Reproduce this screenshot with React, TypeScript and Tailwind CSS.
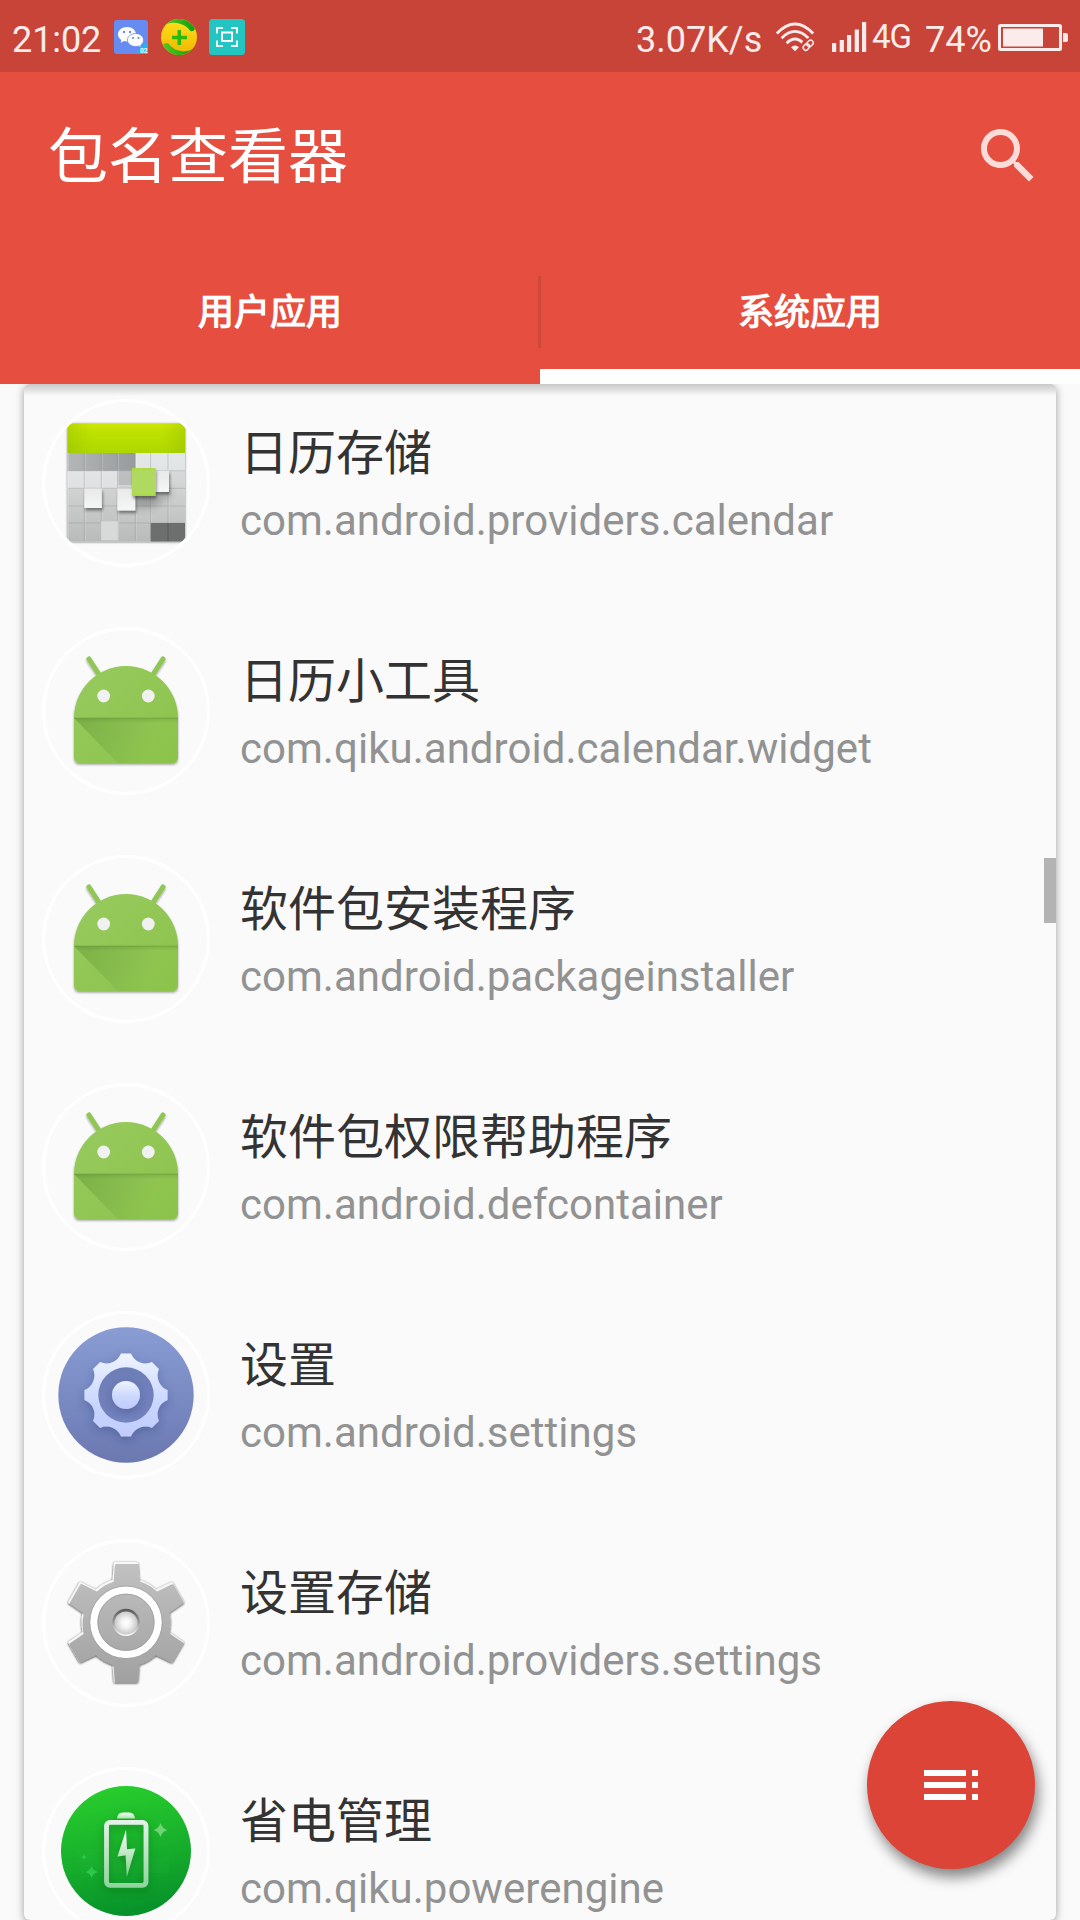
import React from "react";

const CJK = "font-[Roboto,'Noto_Sans_CJK_SC',sans-serif]";

function CalendarIcon() {
  const cols = [-58.5, -41.7, -24.7, -8.5, 9.3, 24.7, 42, 59];
  const rows = [-30, -12.3, 5.3, 23, 40, 58.5];
  return (
    <svg viewBox="-84 -84 168 168" className="size-full">
      <defs>
        <clipPath id="calClip"><circle r="81" /></clipPath>
        <linearGradient id="calTop" x1="0" y1="0" x2="0" y2="1">
          <stop offset="0" stopColor="#cfe600" />
          <stop offset=".25" stopColor="#bfe200" />
          <stop offset="1" stopColor="#aed700" />
        </linearGradient>
        <linearGradient id="calEdge" x1="0" x2="1">
          <stop offset="0" stopColor="#7fa600" stopOpacity=".25" />
          <stop offset=".2" stopColor="#7fa600" stopOpacity="0" />
          <stop offset=".8" stopColor="#7fa600" stopOpacity="0" />
          <stop offset="1" stopColor="#7fa600" stopOpacity=".25" />
        </linearGradient>
        <linearGradient id="calBody" x1="0" y1="0" x2="0" y2="1">
          <stop offset="0" stopColor="#dfe1e2" />
          <stop offset=".5" stopColor="#cdcfcf" />
          <stop offset="1" stopColor="#b9bbba" />
        </linearGradient>
        <linearGradient id="calDark" x1="0" x2="1">
          <stop offset="0" stopColor="#b4b6b7" />
          <stop offset="1" stopColor="#989b9d" />
        </linearGradient>
        <linearGradient id="calTile" x1="0" y1="0" x2="0" y2="1">
          <stop offset="0" stopColor="#e9e9e9" />
          <stop offset="1" stopColor="#f6f6f6" />
        </linearGradient>
        <filter id="calShadow" x="-50%" y="-50%" width="200%" height="200%">
          <feDropShadow dx="1" dy="2.5" stdDeviation="1.6" floodOpacity=".45" />
        </filter>
        <filter id="calBlur" x="-50%" y="-50%" width="200%" height="200%">
          <feGaussianBlur stdDeviation="4" />
        </filter>
        <filter id="calOuter">
          <feDropShadow dx="0" dy="0.5" stdDeviation="1" floodOpacity=".55" />
        </filter>
      </defs>
      <g clipPath="url(#calClip)">
        <rect x="-58.5" y="-59.5" width="117.5" height="118" rx="3" fill="#c5c7c7" filter="url(#calOuter)" />
        <rect x="-58.5" y="-30" width="117.5" height="88.5" fill="url(#calBody)" />
        <rect x="-58.5" y="-12.3" width="51" height="18" fill="#e6e7e8" opacity=".7" />
        <rect x="9" y="-30" width="50" height="18" fill="#e6e9ea" opacity=".7" />
        <rect x="-58.5" y="-30" width="67.8" height="17.7" fill="url(#calDark)" />
        <path d="M-8-12h17v14h-17z" fill="#9da0a1" opacity=".45" />
        <g stroke="#8f9192" strokeWidth=".9" opacity=".42">
          {cols.slice(1, -1).map((x) => <path key={x} d={`M${x} -30V58`} />)}
          {rows.slice(1, -1).map((y) => <path key={y} d={`M-58 ${y}H59`} />)}
        </g>
        <g stroke="#fff" strokeWidth=".8" opacity=".22">
          {cols.slice(0, -1).map((x) => <path key={x} d={`M${x + 1} -30V58`} />)}
        </g>
        <rect x="24.7" y="40" width="34.3" height="18.5" fill="#6d6f6e" />
        <path d="M42 40V58" stroke="#595b5a" strokeWidth="1" />
        <path d="M8 12h28l8-8v8l-18 12H8z" fill="#000" opacity=".28" filter="url(#calBlur)" />
        <rect x="-41.7" y="5.5" width="17.5" height="19.5" fill="url(#calTile)" filter="url(#calShadow)" />
        <rect x="-8.7" y="5.5" width="18" height="22" fill="url(#calTile)" filter="url(#calShadow)" />
        <rect x="28" y="-12.3" width="15" height="21.3" fill="url(#calTile)" filter="url(#calShadow)" />
        <rect x="-25" y="38" width="17" height="19.5" fill="#d9d9da" stroke="#c4c5c5" strokeWidth=".6" />
        <rect x="6" y="-14.7" width="23.5" height="27.8" rx="1" fill="#afd95f" filter="url(#calShadow)" />
        <path d="M6-13.9h23.5M6 12.3h23.5" stroke="#a6df2c" strokeWidth="1.6" />
        <path d="M-58.5-30v-26.500q0-3 3-3h111.500q3 0 3 3v26.500z" fill="url(#calTop)" />
        <path d="M-58.5-30v-26.500q0-3 3-3h111.500q3 0 3 3v26.500z" fill="url(#calEdge)" />
      </g>
    </svg>
  );
}

function AndroidIcon() {
  return (
    <svg viewBox="-84 -84 168 168" className="size-full">
      <defs>
        <linearGradient id="droid" x1="0" y1="0" x2="1" y2="1">
          <stop offset="0" stopColor="#98ca5f" />
          <stop offset="1" stopColor="#8bc34a" />
        </linearGradient>
        <linearGradient id="droidLong" gradientUnits="userSpaceOnUse" x1="-40" y1="10" x2="24" y2="34">
          <stop offset="0" stopColor="#558b2f" stopOpacity=".34" />
          <stop offset="1" stopColor="#558b2f" stopOpacity="0" />
        </linearGradient>
        <linearGradient id="droidFold" x1="0" y1="0" x2="0" y2="1">
          <stop offset="0" stopColor="#40641c" stopOpacity=".2" />
          <stop offset="1" stopColor="#40641c" stopOpacity="0" />
        </linearGradient>
        <filter id="droidShadow" x="-20%" y="-20%" width="140%" height="140%">
          <feDropShadow dx="0" dy="1.6" stdDeviation="1.2" floodOpacity=".38" />
        </filter>
      </defs>
      <g filter="url(#droidShadow)">
        <path d="M-37-52l11 17M37-52L26-35" stroke="#90c653" strokeWidth="5" strokeLinecap="round" />
        <path d="M-52 7a52 52 0 0 1 104 0v39q0 6-6 6h-92q-6 0-6-6z" fill="url(#droid)" />
      </g>
      <path d="M-52 7H52V46q0 6-6 6H-8z" fill="url(#droidLong)" />
      <path d="M-52 7H52v5h-99z" fill="url(#droidFold)" />
      <path d="M-52 7H52" stroke="#6f9f3e" strokeWidth="1" opacity=".6" />
      <circle cx="-22.300" cy="-15" r="6.400" fill="#f1f1f1" />
      <circle cx="22.300" cy="-15" r="6.400" fill="#f1f1f1" />
    </svg>
  );
}

function BlueSettingsIcon() {
  const pt = (x: number, y: number, a: number) => {
    const r = (a * Math.PI) / 180;
    return `${(x * Math.cos(r) - y * Math.sin(r)).toFixed(2)} ${(x * Math.sin(r) + y * Math.cos(r)).toFixed(2)}`;
  };
  let d = "";
  for (let k = 0; k < 8; k++) {
    d += `${k ? "" : "M" + pt(-5, -41.6, 0)}L${pt(5, -41.6, k * 45)}A15.500 15.500 0 0 0 ${pt(-5, -41.6, k * 45 + 45)}`;
  }
  return (
    <svg viewBox="-84 -84 168 168" className="size-full">
      <defs>
        <linearGradient id="blueBg" x1="0" y1="0" x2="0" y2="1">
          <stop offset="0" stopColor="#899cd3" />
          <stop offset=".5" stopColor="#7a8bc4" />
          <stop offset="1" stopColor="#6c78b0" />
        </linearGradient>
        <linearGradient id="blueGear" x1="0" y1="0" x2="0" y2="1">
          <stop offset="0" stopColor="#eff4ff" />
          <stop offset=".6" stopColor="#c9d6ff" />
          <stop offset="1" stopColor="#c0ccfb" />
        </linearGradient>
        <linearGradient id="blueHole" x1="0" y1="0" x2="0" y2="1">
          <stop offset="0" stopColor="#6d7db7" />
          <stop offset="1" stopColor="#7482bd" />
        </linearGradient>
        <filter id="blueShadow" x="-30%" y="-30%" width="160%" height="160%">
          <feDropShadow dx="0" dy="4" stdDeviation="5" floodColor="#2e3a7a" floodOpacity=".35" />
        </filter>
      </defs>
      <circle r="67.700" fill="url(#blueBg)" />
      <path d={d + "Z"} fill="url(#blueGear)" filter="url(#blueShadow)" />
      <circle r="27.700" fill="url(#blueHole)" />
      <circle r="14" fill="url(#blueGear)" filter="url(#blueShadow)" />
    </svg>
  );
}

function GraySettingsIcon() {
  const teeth = [0, 60, 120, 180, 240, 300];
  return (
    <svg viewBox="-84 -84 168 168" className="size-full">
      <defs>
        <linearGradient id="grayGear" gradientUnits="userSpaceOnUse" x1="0" y1="-62" x2="0" y2="62">
          <stop offset="0" stopColor="#c2c2c2" />
          <stop offset="1" stopColor="#a0a0a0" />
        </linearGradient>
        <linearGradient id="grayHole" x1="0" y1="0" x2="0" y2="1">
          <stop offset="0" stopColor="#555" />
          <stop offset=".5" stopColor="#999" />
          <stop offset="1" stopColor="#fff" />
        </linearGradient>
        <radialGradient id="grayLight">
          <stop offset="0" stopColor="#fff" />
          <stop offset=".4" stopColor="#f4f4f4" />
          <stop offset="1" stopColor="#c8c8c8" />
        </radialGradient>
        <clipPath id="gearShape">
          <circle r="44.500" />
          {teeth.map((a) => <path key={a} transform={`rotate(${a})`} d="M-13.600-40L-12.200-58.800Q-12-60.300-10.700-60.300H11Q12-60.300 12.200-58.800L13.600-40z" />)}
        </clipPath>
        <filter id="grayShadow" x="-20%" y="-20%" width="140%" height="140%">
          <feDropShadow dx="0" dy=".8" stdDeviation="1.300" floodOpacity=".8" />
        </filter>
        <filter id="bevel" x="-20%" y="-20%" width="140%" height="140%">
          <feOffset in="SourceAlpha" dy="2.200" dx=".6" result="o" />
          <feComposite in="SourceAlpha" in2="o" operator="out" result="rim" />
          <feFlood floodColor="#fff" floodOpacity=".85" />
          <feComposite in2="rim" operator="in" />
          <feGaussianBlur stdDeviation=".4" result="hi" />
          <feMerge><feMergeNode in="SourceGraphic" /><feMergeNode in="hi" /></feMerge>
        </filter>
      </defs>
      <g transform="translate(0 -.7)">
        <g filter="url(#grayShadow)">
          <g filter="url(#bevel)">
            <rect x="-64" y="-64" width="128" height="128" fill="url(#grayGear)" clipPath="url(#gearShape)" />
          </g>
        </g>
        <circle r="32.200" fill="none" stroke="#fff" strokeWidth="7.500" />
        <circle r="36.300" fill="none" stroke="#a2a2a2" strokeWidth=".8" />
        <circle r="28.200" fill="none" stroke="#999" strokeWidth=".7" />
        <circle r="13.600" fill="url(#grayHole)" />
        <circle r="11.500" cy=".6" fill="url(#grayLight)" />
      </g>
    </svg>
  );
}

function PowerIcon() {
  return (
    <svg viewBox="-84 -84 168 168" className="size-full">
      <defs>
        <linearGradient id="powBg" x1=".4" y1="0" x2=".6" y2="1">
          <stop offset="0" stopColor="#28cd2c" />
          <stop offset=".5" stopColor="#18b02c" />
          <stop offset="1" stopColor="#06902a" />
        </linearGradient>
        <linearGradient id="powBody" gradientUnits="userSpaceOnUse" x1="0" y1="-38" x2="0" y2="37">
          <stop offset="0" stopColor="#f0f5f3" />
          <stop offset="1" stopColor="#8ed39c" />
        </linearGradient>
        <linearGradient id="powCap" x1="0" y1="0" x2="0" y2="1">
          <stop offset="0" stopColor="#fff" />
          <stop offset="1" stopColor="#a4e6a5" />
        </linearGradient>
        <linearGradient id="powBolt" x1="0" y1="0" x2="0" y2="1">
          <stop offset="0" stopColor="#fff" />
          <stop offset="1" stopColor="#7cd089" />
        </linearGradient>
        <filter id="powShadow" x="-40%" y="-40%" width="180%" height="180%">
          <feDropShadow dx="0" dy="3" stdDeviation="4" floodColor="#00520e" floodOpacity=".4" />
        </filter>
      </defs>
      <circle r="65" fill="url(#powBg)" />
      <path d="M-50-1Q-20-5 5 3t38 2V22H-44z" fill="#2fbf46" opacity=".12" />
      <g filter="url(#powShadow)">
        <rect x="-19.500" y="-28.700" width="39.500" height="63" rx="3.500" fill="none" stroke="url(#powBody)" strokeWidth="4.800" />
        <path d="M-9-32.500q.5-6 6-6h6q5.500 0 6 6z" fill="url(#powCap)" />
        <path d="M0-21L-8.500 5.500-.3 4.200.8 26 9.300-2.500 1-1.800z" fill="url(#powBolt)" />
      </g>
      <path d="M34.500-28q1.600 5.400 7 7-5.400 1.600-7 7-1.600-5.400-7-7 5.400-1.600 7-7z" fill="#83dc87" opacity=".8" />
      <path d="M-34.500 15q1.400 4.600 6 6-4.600 1.400-6 6-1.400-4.600-6-6 4.600-1.400 6-6z" fill="#2bc84c" />
      <path d="M-42 3q.6 2.400 3 3-2.400.6-3 3-.6-2.400-3-3 2.400-.6 3-3z" fill="#2bc84c" />
    </svg>
  );
}

const apps = [
  { name: "日历存储", pkg: "com.android.providers.calendar", Icon: CalendarIcon },
  { name: "日历小工具", pkg: "com.qiku.android.calendar.widget", Icon: AndroidIcon },
  { name: "软件包安装程序", pkg: "com.android.packageinstaller", Icon: AndroidIcon },
  { name: "软件包权限帮助程序", pkg: "com.android.defcontainer", Icon: AndroidIcon },
  { name: "设置", pkg: "com.android.settings", Icon: BlueSettingsIcon },
  { name: "设置存储", pkg: "com.android.providers.settings", Icon: GraySettingsIcon },
  { name: "省电管理", pkg: "com.qiku.powerengine", Icon: PowerIcon },
];

function StatusBar() {
  return (
    <div className="flex h-[72px] items-start bg-[#c84438] text-[36px] leading-[42px] text-[#fbeceb]">
      <span className="ml-3 mt-[19px] w-[102px] tracking-[-0.1px]">21:02</span>
      <svg viewBox="0 0 34 34" className="mt-5 size-[34px]">
        <rect width="34" height="34" rx="3" fill="#668bf1" />
        <path d="M13 7c-5 0-9 3.200-9 7.300 0 2.300 1.300 4.300 3.300 5.600l-.6 2.800 3.200-1.600c1 .3 2 .4 3.100.4 5 0 9-3.100 9-7.200S18 7 13 7z" fill="#fff" />
        <path d="M21.500 13.500c-4.400 0-8 2.900-8 6.500s3.600 6.500 8 6.500c1 0 2-.1 2.800-.4l2.900 1.500-.6-2.400c1.800-1.200 2.900-3.100 2.900-5.200 0-3.600-3.600-6.500-8-6.500z" fill="#fff" stroke="#668bf1" strokeWidth=".8" />
        <g fill="#668bf1"><circle cx="10" cy="12" r="1.200" /><circle cx="16" cy="12" r="1.200" /><circle cx="19" cy="18" r="1.100" /><circle cx="24.500" cy="18" r="1.100" /></g>
        <path d="M34 23.500A11 11 0 0 0 24 34H34z" fill="#18b8f0" />
        <text x="26" y="33" fontSize="6.500" fontWeight="700" fill="#fff" fontFamily="Roboto">02</text>
      </svg>
      <svg viewBox="0 0 36 36" className="ml-[13px] mt-[19px] size-9">
        <defs>
          <linearGradient id="coin" x1="0" y1="0" x2="0" y2="1"><stop offset="0" stopColor="#ffe11c" /><stop offset="1" stopColor="#eeb500" /></linearGradient>
          <linearGradient id="coinGreen" x1="0" x2="1"><stop offset="0" stopColor="#58c81e" /><stop offset="1" stopColor="#0b9f0f" /></linearGradient>
          <clipPath id="coinClip"><circle cx="18" cy="18" r="18" /></clipPath>
        </defs>
        <g clipPath="url(#coinClip)">
          <rect width="36" height="36" fill="url(#coin)" />
          <path d="M4 6Q14-4 24 0Q32 3 34 10Q32.500 13 29.500 12Q24 5 16 4Q9 3 4 6z" fill="url(#coinGreen)" />
          <path d="M32 30Q24 38 13 36Q4 33 2 26Q4 23 7.500 24.500Q12 31 20 32Q27 33 32 30z" fill="url(#coinGreen)" />
        </g>
        <path d="M18.300 11v15M11 18.500h15" stroke="#2cb90a" strokeWidth="3.600" />
      </svg>
      <svg viewBox="0 0 36 36" className="ml-3 mt-[19px] size-9">
        <rect width="36" height="36" rx="3.500" fill="#23c5c3" />
        <path d="M8 14.500V9h6M22 9h6v5.500M28 21.500V27h-6M14 27H8v-5.500" fill="none" stroke="#e8ffff" strokeWidth="2" />
        <rect x="13" y="13.500" width="10" height="8.500" fill="none" stroke="#fff" strokeWidth="2" />
      </svg>
      <span className="ml-auto mt-[19px] w-[139px] whitespace-nowrap">3.07K/s</span>
      <svg viewBox="0 0 40 32" className="mt-[22px] h-8 w-10">
        <g fill="none" stroke="#fbeceb" strokeWidth="2.800">
          <path d="M1.800 11.500Q20-7.500 38.200 11.500" />
          <path d="M6.600 16.200Q20 2.600 33.400 16.200" />
          <path d="M11.600 21.200Q20 12.800 28.400 21.200" />
        </g>
        <path d="M16 25.200q4-3.600 8 0L20 29.300z" fill="#fbeceb" />
        <circle cx="33.200" cy="23.200" r="6.600" fill="#c84438" />
        <g fill="none" stroke="#fbeceb" strokeWidth="1.500" transform="translate(33.200 23.200) rotate(-45)">
          <rect x="-6" y="-2.600" width="6.800" height="5.200" rx="2.600" />
          <rect x="-.8" y="-2.600" width="6.800" height="5.200" rx="2.600" />
        </g>
      </svg>
      <svg viewBox="0 0 35 30" className="ml-[17px] mt-[22px] h-[30px] w-[35px]" fill="#fbeceb">
        <path d="M0 21h4.200v9H0zM7.700 18h4.200v12H7.700zM15 13h4.200v17H15zM22.700 7.500h4.200V30h-4.200zM30 0h4.200v30H30z" />
      </svg>
      <span className="ml-[5px] mt-4 w-[53px] whitespace-nowrap text-[33px] tracking-[-1px]">4G</span>
      <span className="mt-[19px] w-[73px] whitespace-nowrap">74%</span>
      <svg viewBox="0 0 70 27" className="mr-[12px] mt-6 h-[27px] w-[70px]">
        <rect x="1.500" y="1.500" width="61" height="24" rx="1" fill="none" stroke="#fbeceb" strokeWidth="3" />
        <rect x="5" y="4.500" width="40" height="18" fill="#fbeceb" />
        <path d="M65 9h3q2 0 2 2v5q0 2-2 2h-3z" fill="#fbeceb" />
      </svg>
    </div>
  );
}

export default function App() {
  return (
    <div className={`relative flex h-[1920px] w-[1080px] flex-col overflow-hidden bg-[#fafafa] ${CJK}`}>
      <StatusBar />
      <header className="z-10 flex h-[312px] shrink-0 flex-col bg-[#e64e40] text-white">
        <div className="flex h-[168px] items-start justify-between pl-12 pr-9 pt-12">
          <h1 className="mt-2 text-[60px] leading-[60px]">包名查看器</h1>
          <svg viewBox="0 0 24 24" className="size-[72px]" fill="#fbdcd9">
            <path d="M15.500 14h-.79l-.28-.27C15.410 12.590 16 11.110 16 9.500 16 5.910 13.090 3 9.500 3S3 5.910 3 9.500 5.910 16 9.500 16c1.610 0 3.090-.59 4.230-1.570l.27.28v.79l5 4.990L20.490 19l-4.990-5zm-6 0C7.010 14 5 11.990 5 9.500S7.010 5 9.500 5 14 7.010 14 9.500 11.990 14 9.500 14z" />
          </svg>
        </div>
        <nav className="relative grid h-36 grid-cols-2 text-center text-[36px] leading-[146px] [-webkit-text-stroke:1.2px_white]">
          <div className="h-36">用户应用</div>
          <div className="h-36 border-b-[15px] border-white">系统应用</div>
          <span className="absolute left-[538px] top-9 h-[72px] w-[3px] bg-[#cf473a]" />
        </nav>
      </header>
      <main className="relative mx-6 h-[1536px] shrink-0 rounded-md bg-[#fafafa] shadow-[0_2px_9px_rgba(0,0,0,0.38)]">
        <div className="absolute inset-x-0 top-0 h-3 rounded-t-md bg-linear-to-b from-black/20 to-transparent" />
        <ul className="h-full overflow-hidden">
          {apps.map(({ name, pkg, Icon }) => (
            <li key={pkg} className="flex h-[228px] pl-[18px] pt-[15px]">
              <div className="relative size-[168px] shrink-0 rounded-full">
                <Icon />
                <span className="absolute inset-0 rounded-full border-[3px] border-white" />
              </div>
              <div className="ml-[30px] flex flex-col whitespace-nowrap">
                <span className="mt-[31px] text-[48px] leading-[48px] text-[#333]">{name}</span>
                <span className="mt-[19px] text-[42px] leading-[48px] tracking-[0.035px] text-[#929292]">{pkg}</span>
              </div>
            </li>
          ))}
        </ul>
        <span className="absolute right-0 top-[474px] h-[65px] w-3 bg-[#b3b3b3]" />
      </main>
      <button className="absolute left-[867px] top-[1701px] flex size-[168px] items-center justify-center rounded-full bg-[#db4437] shadow-[3px_8px_14px_rgba(0,0,0,0.48)]">
        <svg viewBox="0 0 54 30" className="h-[30px] w-[54px]" fill="#fff">
          <path d="M0 0h42v6H0zM0 12h42v6H0zM0 24h42v6H0zM48 0h6v6h-6zM48 12h6v6h-6zM48 24h6v6h-6z" />
        </svg>
      </button>
    </div>
  );
}
